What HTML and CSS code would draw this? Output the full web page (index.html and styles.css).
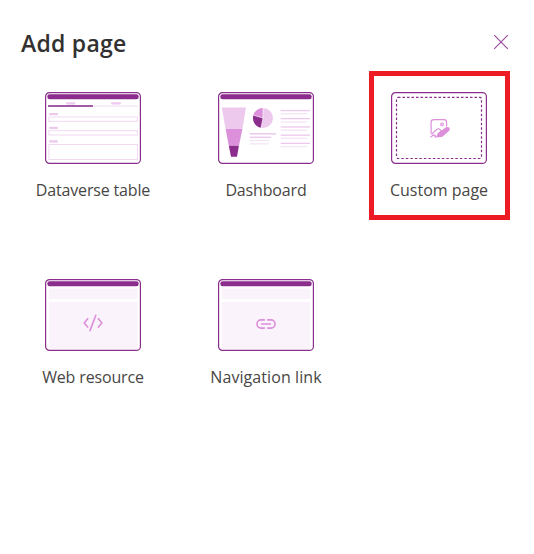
FILE: index.html
```html
<!DOCTYPE html>
<html lang="en">
<head>
<meta charset="utf-8">
<title>Add page</title>
<link rel="stylesheet" href="styles.css">
</head>
<body>
<main class="dialog">
  <header class="header">
    <h1 class="title">Add page</h1>
    <button class="close" aria-label="Close"><svg width="16" height="16" viewBox="0 0 16 16"><path d="M1.2 1.2 14.8 14.8M14.8 1.2 1.2 14.8" fill="none" stroke="#984b9d" stroke-width="1.15"/></svg></button>
  </header>
  <section class="options">
    <div class="option">
      <svg class="art" viewBox="0 0 96 72">
        <rect class="frame" x=".6" y=".6" width="94.8" height="70.8" rx="4"/>
        <rect class="dark" x="2.3" y="2.2" width="91.4" height="5" rx="2.3"/>
        <g class="light"><rect x="21" y="10.2" width="9.3" height="2.3" rx="1"/><rect x="66" y="10.2" width="10" height="2.3" rx="1"/><rect x="4" y="21" width="9" height="2.2" rx="1"/><rect x="4" y="34.7" width="9" height="2.2" rx="1"/><rect x="4" y="48.3" width="9" height="2.2" rx="1"/></g>
        <rect class="pale" x="48" y="13.3" width="44.8" height="1.5"/>
        <rect class="mid-dark" x="3" y="13.1" width="45" height="1.8" rx=".5"/>
        <g class="field"><rect x="3.9" y="25" width="88.5" height="4.3"/><rect x="3.9" y="38.7" width="88.5" height="4.3"/><rect x="3.9" y="52.5" width="88.5" height="15"/></g>
      </svg>
      <span class="label l1">Dataverse table</span>
    </div>
    <div class="option">
      <svg class="art" viewBox="0 0 96 72">
        <rect class="frame" x=".6" y=".6" width="94.8" height="70.8" rx="4"/>
        <rect class="dark" x="2.3" y="2.2" width="91.4" height="5" rx="2.3"/>
        <path class="light" d="M3.7 15.4H28L24.4 37.1H7.6Z"/>
        <path class="medium" d="M7.6 37.1H24.4L20.9 53.7H10.8Z"/>
        <path class="dark" d="M10.8 53.7H20.9L19 64.7H13Z"/>
        <circle class="light" cx="45" cy="26" r="10"/>
        <path class="medium" d="M45 26V16A10 10 0 0 0 35.4 23.2Z"/>
        <path class="dark" d="M45 26 35.4 23.2A10 10 0 0 0 43 35.8Z"/>
        <path d="M45 16V26L43 36M45 26 35.4 23.2" fill="none" stroke="#fff" stroke-width=".6"/>
        <g class="light"><rect x="31.7" y="41.1" width="26.3" height="1.5"/><rect x="31.7" y="44.6" width="21.6" height="1.4"/><rect x="62.7" y="17.9" width="29.3" height="1.3"/><rect x="62.7" y="26" width="29.3" height="1.3"/><rect x="62.7" y="34.3" width="29.3" height="1.3"/><rect x="62.7" y="42.5" width="29.3" height="1.3"/><rect x="62.7" y="50.7" width="29.3" height="1.3"/></g>
        <g class="pale"><rect x="31.7" y="47.8" width="19.4" height="1.3"/><rect x="31.7" y="51.2" width="19.4" height="1.3"/><rect x="62.7" y="21.1" width="26.6" height="1.3"/><rect x="62.7" y="29.3" width="26.6" height="1.3"/><rect x="62.7" y="37.5" width="26.6" height="1.3"/><rect x="62.7" y="45.7" width="26.6" height="1.3"/><rect x="62.7" y="53.9" width="26.6" height="1.3"/></g>
      </svg>
      <span class="label l2">Dashboard</span>
    </div>
    <div class="option selected">
      <svg class="art" viewBox="0 0 96 72">
        <rect class="frame" x=".6" y=".6" width="94.8" height="70.8" rx="4"/>
        <rect class="dashes" x="5.5" y="5.4" width="85" height="61.1" rx="1.5"/>
        <g fill="none" stroke="#dc8fdb" stroke-width="1.2" stroke-linecap="round" stroke-linejoin="round">
          <path d="M40.1 41.3V30.2Q40.1 27.6 42.7 27.6H53Q55.6 27.6 55.6 30.2V34"/>
          <circle cx="51" cy="32.3" r="1.3"/>
          <path d="M41 42 45.8 37.4Q47.3 36.2 48.8 37.4L50 38.6"/>
          <path d="M39.8 44.9Q42 42.8 43.7 43.2C45.3 43.6 42.5 45.4 45.2 44.8"/>
        </g>
        <path class="medium" d="M45.2 45.4 46.5 41.8Q46.9 40.9 47.8 40.2L55 35.3Q57 34.5 58.4 35.7Q59.3 37 58.3 38.7L51.9 44.2Q50.9 45 49.6 45.1Z"/>
      </svg>
      <span class="label l3">Custom page</span>
    </div>
    <div class="option">
      <svg class="art" viewBox="0 0 96 72">
        <rect class="frame" x=".6" y=".6" width="94.8" height="70.8" rx="4"/>
        <rect class="dark" x="2.3" y="2.2" width="91.4" height="5" rx="2.3"/>
        <rect class="panel" x="3.8" y="9.5" width="88.6" height="10.8" rx="1"/><rect class="panel" x="3.8" y="23" width="88.6" height="47" rx="1"/>
        <path class="icon" d="M42.7 39.7 39.2 43.9 42.7 48.1M53.4 39.7 56.9 43.9 53.4 48.1M50.8 36.3 45 51.6"/>
      </svg>
      <span class="label l4">Web resource</span>
    </div>
    <div class="option">
      <svg class="art" viewBox="0 0 96 72">
        <rect class="frame" x=".6" y=".6" width="94.8" height="70.8" rx="4"/>
        <rect class="dark" x="2.3" y="2.2" width="91.4" height="5" rx="2.3"/>
        <rect class="panel" x="3.8" y="9.5" width="88.6" height="10.8" rx="1"/><rect class="panel" x="3.8" y="23" width="88.6" height="47" rx="1"/>
        <path class="icon" d="M46.3 40.9H43.1A4.1 4.1 0 0 0 43.1 49.1H46.3M49.7 40.9H52.9A4.1 4.1 0 0 1 52.9 49.1H49.7M43.6 45H52.4"/>
      </svg>
      <span class="label l5">Navigation link</span>
    </div>
  </section>
</main>
</body>
</html>
```
FILE: styles.css
```css
* { box-sizing: border-box; }
body { margin: 0; background: #fff; color: #323130; font-family: "Open Sans", "Noto Sans", sans-serif; }
.dialog { height: 554px; overflow: hidden; }
.header { display: flex; justify-content: space-between; align-items: center; height: 84px; padding: 0 25px 0 21px; }
.title { margin: 0; padding-top: 2px; font-size: 23px; line-height: 30px; font-weight: 600; letter-spacing: .25px; }
.close { display: flex; width: 16px; height: 16px; padding: 0; border: 0; background: none; }
.options { display: grid; grid-template-columns: repeat(3, 173px); grid-auto-rows: 187px; padding-left: 6.5px; }
.option { position: relative; display: flex; flex-direction: column; align-items: center; padding-top: 8px; }
.art { display: block; width: 96px; height: 72px; }
.label { margin-top: 15px; color: #484644; font-size: 16px; line-height: 22px; white-space: nowrap; }
.l1 { letter-spacing: -.16px; }
.l2 { letter-spacing: -.16px; }
.l4 { letter-spacing: -.15px; }
.l5 { letter-spacing: .08px; }
.selected::after { content: ""; position: absolute; box-sizing: border-box; left: 16.5px; top: -13px; width: 141px; height: 149px; border: 5px solid #ed1c24; }
.frame { fill: #fff; stroke: #8b2d8c; stroke-width: 1.2; }
.dark { fill: #8b2d8c; }
.mid-dark { fill: #a45ba6; }
.light { fill: #edc9ed; }
.medium { fill: #dc8fdb; }
.pale { fill: #f6e5f6; }
.panel { fill: #faf3fb; }
.field { fill: none; stroke: #f2d9f2; stroke-width: 1; }
.dashes { fill: none; stroke: #8b2d8c; stroke-width: 1.2; stroke-dasharray: 2.5 2; }
.icon { fill: none; stroke: #dc8fdb; stroke-width: 1.6; stroke-linecap: round; stroke-linejoin: round; }
```
